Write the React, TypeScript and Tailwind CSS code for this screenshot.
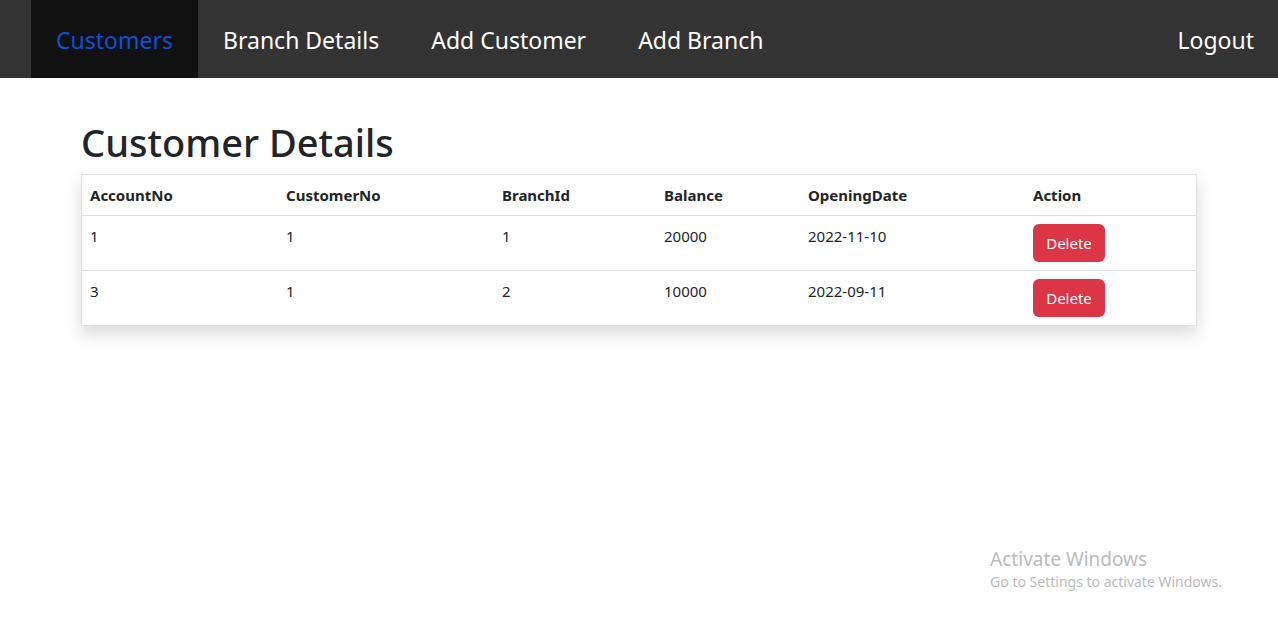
const links = [
  { label: 'Branch Details', href: '#branches' },
  { label: 'Add Customer', href: '#add-customer' },
  { label: 'Add Branch', href: '#add-branch' },
];

const columns = [
  { label: 'AccountNo', width: 'w-[196px]' },
  { label: 'CustomerNo', width: 'w-[216px]' },
  { label: 'BranchId', width: 'w-[162px]' },
  { label: 'Balance', width: 'w-[144px]' },
  { label: 'OpeningDate', width: 'w-[225px]' },
  { label: 'Action', width: 'w-auto' },
];

const rows = [
  ['1', '1', '1', '20000', '2022-11-10'],
  ['3', '1', '2', '10000', '2022-09-11'],
];

export default function App() {
  return (
    <div className="flex min-h-screen flex-col bg-white font-['Noto_Sans','Open_Sans',sans-serif] text-[#212529]">
      <nav className="flex justify-between bg-[#333] pl-[31px] text-[23px] leading-9 text-white">
        <div className="flex">
          <a href="#customers" aria-current="page" className="bg-[#111] px-[25px] pt-[22px] pb-5 text-[#0d50d8]">
            Customers
          </a>
          <div className="flex gap-0.5">
            {links.map(({ label, href }) => (
              <a key={label} href={href} className="px-[25px] pt-[22px] pb-5">
                {label}
              </a>
            ))}
          </div>
        </div>
        <a href="#logout" className="px-6 pt-[22px] pb-5">
          Logout
        </a>
      </nav>

      <main className="px-[81px] pt-10">
        <h1 className="mb-2 text-[38px] leading-12 font-medium">Customer Details</h1>
        <div className="border border-[#dee2e6] shadow-[0_8px_16px_rgba(0,0,0,0.15)]">
          <table className="w-full table-fixed border-separate border-spacing-0 text-left text-[15px] leading-6">
            <thead>
              <tr>
                {columns.map(({ label, width }) => (
                  <th key={label} className={`${width} p-2 font-bold`}>
                    {label}
                  </th>
                ))}
              </tr>
            </thead>
            <tbody>
              {rows.map((cells) => (
                <tr key={cells[0]} className="align-top">
                  {cells.map((cell, i) => (
                    <td key={i} className="border-t border-[#dee2e6] p-2">
                      {cell}
                    </td>
                  ))}
                  <td className="border-t border-[#dee2e6] p-2">
                    <button type="button" className="block h-[38px] w-[72px] rounded-md bg-[#dc3545] text-[15px] text-white">
                      Delete
                    </button>
                  </td>
                </tr>
              ))}
            </tbody>
          </table>
        </div>
      </main>

      <aside className="mt-auto mr-14 mb-[30px] self-end text-[#bbb]">
        <p className="text-[19px] leading-6">Activate Windows</p>
        <p className="text-sm leading-[22px]">Go to Settings to activate Windows.</p>
      </aside>
    </div>
  );
}
